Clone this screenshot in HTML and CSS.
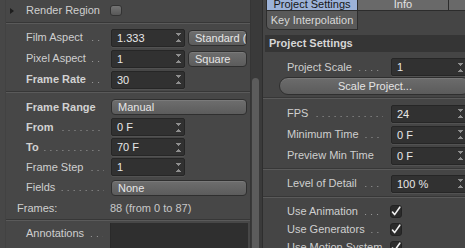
FILE: index.html
```html
<!DOCTYPE html>
<html lang="en">
<head>
    <meta charset="UTF-8">
    <title>Render Settings</title>
    <link rel="stylesheet" href="styles.css">
</head>
<body>
<div class="app">

    <div class="left">
        <div class="group">
            <div class="row h21 render">
                <span class="twisty"></span>
                <span class="label short">Render Region</span>
                <span class="check-off"></span>
            </div>
            <div class="sep top1"></div>

            <div class="row h21">
                <span class="label">Film Aspect<span class="dots"></span></span>
                <span class="field">1.333<span class="spin"></span></span>
                <span class="btn side">Standard (4:3)</span>
            </div>
            <div class="row h21">
                <span class="label">Pixel Aspect<span class="dots"></span></span>
                <span class="field">1<span class="spin"></span></span>
                <span class="btn side">Square</span>
            </div>
            <div class="row h21">
                <span class="label bold">Frame Rate<span class="dots"></span></span>
                <span class="field">30<span class="spin"></span></span>
            </div>
            <div class="sep top2"></div>

            <div class="row h20">
                <span class="label bold">Frame Range</span>
                <span class="btn wide">Manual</span>
            </div>
            <div class="row h20">
                <span class="label bold">From<span class="dots"></span></span>
                <span class="field">0 F<span class="spin"></span></span>
            </div>
            <div class="row h20">
                <span class="label bold">To<span class="dots"></span></span>
                <span class="field">70 F<span class="spin"></span></span>
            </div>
            <div class="row h20">
                <span class="label">Frame Step<span class="dots"></span></span>
                <span class="field">1<span class="spin"></span></span>
            </div>
            <div class="row h21">
                <span class="label">Fields<span class="dots"></span></span>
                <span class="btn wide">None</span>
            </div>
            <div class="row h19 frames">
                <span class="frames-label">Frames:</span>
                <span class="frames-value">88 (from 0 to 87)</span>
            </div>
            <div class="sep top3"></div>

            <div class="row notes">
                <span class="label">Annotations<span class="dots"></span></span>
                <span class="textbox"></span>
            </div>
        </div>
    </div>

    <div class="scroll"><div class="thumb"></div></div>

    <div class="right">
        <div class="tabs">
            <span class="tab active">Project Settings</span>
            <span class="tab">Info</span>
            <span class="tab last"></span>
        </div>
        <div class="tabs2">
            <span class="tab2">Key Interpolation</span>
        </div>

        <div class="header">Project Settings</div>

        <div class="row h20 rrow scale">
            <span class="label rlabel">Project Scale<span class="dots"></span></span>
            <span class="field rfield">1<span class="spin"></span></span>
        </div>
        <div class="pill">Scale Project...</div>
        <div class="sep rsep1"></div>

        <div class="row h21 rrow">
            <span class="label rlabel">FPS<span class="dots"></span></span>
            <span class="field rfield">24<span class="spin"></span></span>
        </div>
        <div class="row h21 rrow">
            <span class="label rlabel">Minimum Time<span class="dots"></span></span>
            <span class="field rfield">0 F<span class="spin"></span></span>
        </div>
        <div class="row h21 rrow">
            <span class="label rlabel">Preview Min Time<span class="dots"></span></span>
            <span class="field rfield">0 F<span class="spin"></span></span>
        </div>
        <div class="sep rsep2"></div>

        <div class="row h21 rrow">
            <span class="label rlabel">Level of Detail<span class="dots"></span></span>
            <span class="field rfield">100 %<span class="spin"></span></span>
        </div>
        <div class="sep rsep3"></div>

        <div class="row h18 rrow">
            <span class="label rlabel">Use Animation<span class="dots"></span></span>
            <span class="check"><svg width="10" height="10" viewBox="0 0 10 10"><path d="M1.5 6 L3.6 8.6 L8.8 1.2" fill="none" stroke="#f2f2f2" stroke-width="1.6" stroke-linecap="round" stroke-linejoin="round"/></svg></span>
        </div>
        <div class="row h18 rrow">
            <span class="label rlabel">Use Generators<span class="dots"></span></span>
            <span class="check"><svg width="10" height="10" viewBox="0 0 10 10"><path d="M1.5 6 L3.6 8.6 L8.8 1.2" fill="none" stroke="#f2f2f2" stroke-width="1.6" stroke-linecap="round" stroke-linejoin="round"/></svg></span>
        </div>
        <div class="row h18 rrow">
            <span class="label rlabel">Use Motion System<span class="dots"></span></span>
            <span class="check"><svg width="10" height="10" viewBox="0 0 10 10"><path d="M1.5 6 L3.6 8.6 L8.8 1.2" fill="none" stroke="#f2f2f2" stroke-width="1.6" stroke-linecap="round" stroke-linejoin="round"/></svg></span>
        </div>
    </div>

</div>
</body>
</html>
```

FILE: styles.css
```css
body {
    margin: 0;
    padding: 0;
    font-family: "Liberation Sans", Arial, sans-serif;
    font-size: 11px;
    color: #cfcfcf;
    background-color: #454545;
}
.app {
    display: flex;
    width: 465px;
    height: 248px;
    overflow: hidden;
}

/* left column */
.left {
    width: 250px;
    flex-shrink: 0;
    background-color: #474747;
    padding-left: 5px;
    box-sizing: border-box;
}
.group {
    border-left: 1px solid #424242;
    height: 100%;
}
.row {
    display: flex;
    align-items: center;
    padding-left: 20px;
    white-space: nowrap;
}
.h18 { height: 18px; }
.h19 { height: 19px; }
.h20 { height: 20px; }
.h21 { height: 21px; }
.label {
    display: flex;
    align-items: baseline;
    width: 85px;
    flex-shrink: 0;
    line-height: 13px;
}
.label.bold {
    font-weight: bold;
    color: #d2d2d2;
}
.dots {
    flex: 1;
    height: 1px;
    margin: 0 7px 0 4px;
    background-image: linear-gradient(to right, #9a9a9a 1px, transparent 1px);
    background-size: 6px 1px;
    background-position: right bottom;
    background-repeat: repeat-x;
}
.render {
    padding-left: 4px;
}
.twisty {
    width: 0;
    height: 0;
    border-left: 4px solid #1e1e1e;
    border-top: 3px solid transparent;
    border-bottom: 3px solid transparent;
    margin-right: 12px;
}
.label.short {
    width: 84px;
}
.check-off {
    width: 12px;
    height: 11px;
    box-sizing: border-box;
    border: 1px solid #333;
    border-radius: 3px;
    background: linear-gradient(#747474, #585858);
}
.sep {
    border-top: 1px solid #373737;
    border-bottom: 1px solid #5a5a5a;
}
.top1 { margin: 1px 0 3px; }
.top2 { margin: 1px 0 4px; }
.top3 { margin: 2px 0 2px; }

.field {
    display: flex;
    align-items: center;
    justify-content: space-between;
    width: 74px;
    height: 18px;
    box-sizing: border-box;
    padding: 0 3px 0 5px;
    background-color: #313131;
    border: 1px solid #262626;
    border-radius: 2px;
    box-shadow: 0 1px 0 #525252;
    color: #e8e8e8;
}
.spin {
    width: 5px;
    height: 9px;
    background:
        linear-gradient(to top right, transparent 50%, #8e8e8e 50%) 0 0 / 3px 4px no-repeat,
        linear-gradient(to top left, transparent 50%, #8e8e8e 50%) 2px 0 / 3px 4px no-repeat,
        linear-gradient(to bottom right, transparent 50%, #8e8e8e 50%) 0 5px / 3px 4px no-repeat,
        linear-gradient(to bottom left, transparent 50%, #8e8e8e 50%) 2px 5px / 3px 4px no-repeat;
    transform: scaleX(-1);
}
.btn {
    display: flex;
    align-items: center;
    height: 16px;
    box-sizing: border-box;
    padding-left: 6px;
    background: linear-gradient(#6e6e6e, #5c5c5c);
    border: 1px solid #2f2f2f;
    border-radius: 4px;
    box-shadow: inset 0 1px 0 #7a7a7a;
    color: #e6e6e6;
    overflow: hidden;
}
.btn.side {
    width: 59px;
    margin-left: 3px;
}
.btn.wide {
    width: 136px;
}
.frames {
    padding-left: 11px;
}
.frames-label {
    width: 93px;
}
.frames-value {
    color: #c8c8c8;
}
.notes {
    align-items: flex-start;
}
.notes .label {
    padding-top: 4px;
    width: 84px;
}
.textbox {
    width: 137px;
    height: 40px;
    background-color: #2f2f2f;
    border-left: 1px solid #2a2a2a;
}

/* scrollbar */
.scroll {
    width: 12px;
    flex-shrink: 0;
    box-sizing: border-box;
    background-color: #3a3a3a;
    border-left: 1px solid #353535;
}
.thumb {
    width: 7px;
    height: 200px;
    margin: 78px 0 0 1px;
    background-color: #5c5c5c;
    border-radius: 4px 4px 0 0;
}

/* right column */
.right {
    flex: 1;
    min-width: 0;
    overflow: hidden;
    border-left: 1px solid #2e2e2e;
    background-color: #454545;
}
.tabs {
    display: flex;
    margin-left: 3px;
    height: 11px;
}
.tab {
    width: 91px;
    height: 11px;
    box-sizing: border-box;
    line-height: 9px;
    text-align: center;
    background-color: #696969;
    border-right: 1px solid #2c2c2c;
    border-bottom: 1px solid #2c2c2c;
    color: #e2e2e2;
}
.tab.active {
    width: 92px;
    background-color: #9cb2d8;
    border-left: 1px solid #2c2c2c;
    color: #161616;
}
.tab.last {
    flex: 1;
    border-right: none;
}
.tabs2 {
    display: flex;
    margin-left: 3px;
}
.tab2 {
    width: 92px;
    height: 19px;
    box-sizing: border-box;
    line-height: 18px;
    text-align: center;
    background-color: #595959;
    border: 1px solid #2e2e2e;
    border-top: none;
    border-bottom-left-radius: 5px;
    color: #d8d8d8;
}
.header {
    height: 17px;
    line-height: 17px;
    margin: 5px 0 0 2px;
    padding-left: 4px;
    background-color: #353535;
    font-weight: bold;
    color: #d6d6d6;
}
.rrow {
    padding-left: 24px;
}
.scale {
    margin-top: 5px;
}
.rlabel {
    width: 104px;
}
.rlabel .dots {
    margin-right: 8px;
}
.rfield {
    width: 76px;
    flex-shrink: 0;
}
.pill {
    width: 192px;
    height: 18px;
    box-sizing: border-box;
    margin-left: 16px;
    line-height: 16px;
    text-align: center;
    background: linear-gradient(#6c6c6c, #5b5b5b);
    border: 1px solid #2f2f2f;
    border-radius: 9px;
    box-shadow: inset 0 1px 0 #787878;
    color: #e4e4e4;
}
.rsep1 { margin: 2px 0 4px; }
.rsep2 { margin: 2px 0 3px; }
.rsep3 { margin: 2px 0 4px; }
.check {
    display: flex;
    align-items: center;
    justify-content: center;
    width: 12px;
    height: 13px;
    box-sizing: border-box;
    margin-left: -1px;
    background-color: #2b2b2b;
    border: 1px solid #232323;
    border-radius: 3px;
}
```
